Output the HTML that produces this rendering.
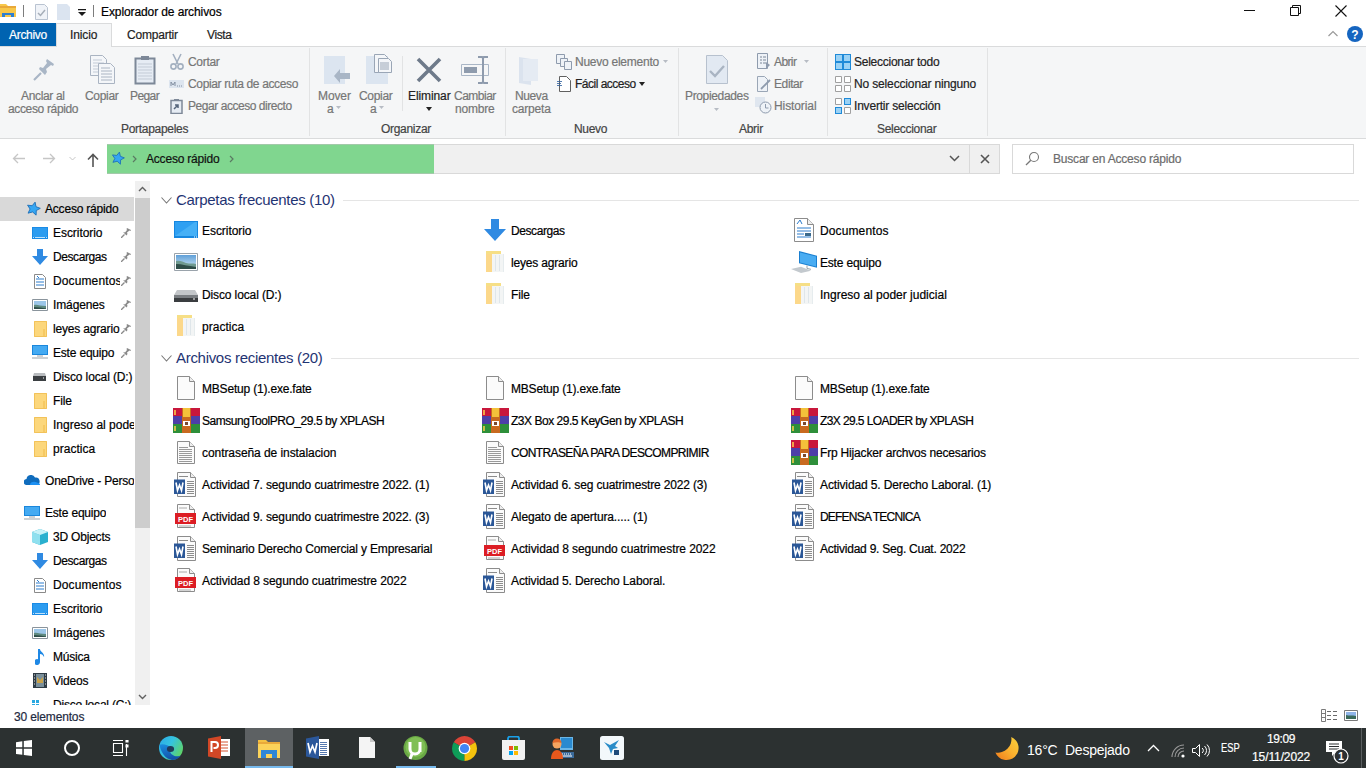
<!DOCTYPE html>
<html><head><meta charset="utf-8">
<style>
*{box-sizing:border-box;margin:0;padding:0}
html,body{width:1366px;height:768px;overflow:hidden;background:#fff;font-family:"Liberation Sans",sans-serif;font-size:12px;color:#000;position:relative}
.a{position:absolute;white-space:nowrap}
.t{font-size:12px;line-height:14px;-webkit-text-stroke:.2px currentColor}
.sep{top:48px;width:1px;height:88px;background:#e2e3e4}
.gl{top:122px;color:#444;letter-spacing:-.3px}
.dis{color:#767676}
.nt{overflow:hidden;color:#000;letter-spacing:-.2px}
.ct{color:#000;letter-spacing:-.18px}
.hd{font-size:15px;line-height:18px;color:#1f3473;letter-spacing:-.3px}
</style></head><body>
<!-- TITLE BAR -->
<div class="a" style="left:0;top:0;width:1366px;height:23px;background:#fff"></div>
<svg class="a" style="left:0;top:2px" width="17" height="16" viewBox="0 0 17 16">
 <path d="M0 2h6l2 2h8v11H0z" fill="#f8c84a"/><path d="M0 4h16v2H0z" fill="#e9a93a"/>
 <path d="M2 11h12v4h-3v-2H5v2H2z" fill="#2f7fd0"/>
</svg>
<div class="a" style="left:23px;top:5px;width:1px;height:12px;background:#7d7d7d"></div>
<svg class="a" style="left:35px;top:4px" width="13" height="16" viewBox="0 0 13 16">
 <path d="M.5.5h9l3 3v12H.5z" fill="#f0f3f8" stroke="#b9c3d1"/><path d="M3 9l2.5 2.5L10 6" stroke="#a6aeb8" stroke-width="1.5" fill="none"/>
</svg>
<svg class="a" style="left:57px;top:4px" width="14" height="16" viewBox="0 0 14 16">
 <path d="M0 0h10l3 3v13H0z" fill="#dbe4f0"/>
</svg>
<svg class="a" style="left:78px;top:9px" width="8" height="8" viewBox="0 0 8 8">
 <path d="M0 0h8v1.3H0z M0 3h8L4 7z" fill="#1a1a1a"/>
</svg>
<div class="a" style="left:93px;top:5px;width:1px;height:12px;background:#7d7d7d"></div>
<div class="a t" style="left:101px;top:5px;letter-spacing:-.1px">Explorador de archivos</div>
<!-- window controls -->
<div class="a" style="left:1244px;top:10px;width:11px;height:1px;background:#111"></div>
<svg class="a" style="left:1290px;top:5px" width="11" height="11" viewBox="0 0 11 11">
 <path d="M.5 2.5h8v8h-8z M2.5 2.5V.5h8v8h-2" fill="none" stroke="#111"/>
</svg>
<svg class="a" style="left:1335px;top:5px" width="12" height="12" viewBox="0 0 12 12">
 <path d="M.5.5l11 11M11.5.5l-11 11" stroke="#111" stroke-width="1.1"/>
</svg>
<!-- TABS -->
<div class="a" style="left:0;top:23px;width:56px;height:23px;background:#0063b1"></div>
<div class="a t" style="left:9px;top:28px;color:#fff;letter-spacing:-.3px">Archivo</div>
<div class="a" style="left:56px;top:23px;width:56px;height:24px;background:#f5f6f7;border:1px solid #dadbdc;border-bottom:none"></div>
<div class="a t" style="left:70px;top:28px;color:#222;letter-spacing:-.1px">Inicio</div>
<div class="a t" style="left:127px;top:28px;color:#222;letter-spacing:-.2px">Compartir</div>
<div class="a t" style="left:207px;top:28px;color:#222;letter-spacing:-.4px">Vista</div>
<svg class="a" style="left:1328px;top:30px" width="10" height="7" viewBox="0 0 10 7">
 <path d="M.5 6L5 1.5 9.5 6" fill="none" stroke="#9a9a9a" stroke-width="1.2"/>
</svg>
<svg class="a" style="left:1347px;top:26px" width="16" height="16" viewBox="0 0 16 16">
 <circle cx="8" cy="8" r="8" fill="#1565c0"/>
 <text x="8" y="12.5" font-family="Liberation Sans" font-weight="bold" font-size="12" fill="#fff" text-anchor="middle">?</text>
</svg>
<!-- RIBBON -->
<div class="a" style="left:0;top:46px;width:1366px;height:93px;background:#f5f6f7;border-top:1px solid #dadbdc;border-bottom:1px solid #dadbdc"></div>
<!-- Inicio tab over ribbon border -->
<div class="a" style="left:56px;top:23px;width:56px;height:24px;background:#f5f6f7;border:1px solid #dadbdc;border-bottom:none"></div>
<div class="a t" style="left:70px;top:28px;color:#222;letter-spacing:-.1px">Inicio</div>
<!-- separators -->
<div class="a sep" style="left:309px"></div>
<div class="a sep" style="left:505px"></div>
<div class="a sep" style="left:678px"></div>
<div class="a sep" style="left:827px"></div>
<div class="a sep" style="left:987px"></div>
<div class="a" style="left:402px;top:56px;width:1px;height:55px;background:#e2e3e4"></div>
<!-- group labels -->
<div class="a t gl" style="left:121px">Portapapeles</div>
<div class="a t gl" style="left:381px">Organizar</div>
<div class="a t gl" style="left:574px">Nuevo</div>
<div class="a t gl" style="left:739px">Abrir</div>
<div class="a t gl" style="left:877px">Seleccionar</div>
<!-- Portapapeles -->
<svg class="a" style="left:33px;top:59px" width="22" height="22" viewBox="0 0 22 22">
 <path d="M1 21l7-7" stroke="#a9b6c6" stroke-width="2.2"/>
 <path d="M6 10l6 6 2-3-1-3 5-4 2 1 1-2-7-5-1 2 1 2-4 5-3-1z" fill="#a9b6c6"/>
</svg>
<div class="a t dis" style="left:21px;top:89px;letter-spacing:-.35px">Anclar al</div>
<div class="a t dis" style="left:8px;top:102px;letter-spacing:-.35px">acceso rápido</div>
<svg class="a" style="left:90px;top:55px" width="26" height="30" viewBox="0 0 26 30">
 <path d="M.5.5h12l4 4v16H.5z" fill="#f4f6f9" stroke="#aab4c2"/>
 <path d="M3 5h9M3 8h11M3 11h11M3 14h11M3 17h11" stroke="#c3cbd6"/>
 <path d="M8.5 8.5h12l4 4v16h-16z" fill="#f4f6f9" stroke="#aab4c2"/>
 <path d="M11 13h9M11 16h11M11 19h11M11 22h11M11 25h11" stroke="#aab4c2"/>
</svg>
<div class="a t dis" style="left:85px;top:89px;letter-spacing:-.3px">Copiar</div>
<svg class="a" style="left:134px;top:55px" width="22" height="30" viewBox="0 0 22 30">
 <path d="M1.5 3.5h19v25h-19z" fill="#e6ecf4" stroke="#7d8898" stroke-width="2"/>
 <path d="M7 1h8v4H7z" fill="#7d8898"/>
 <path d="M4 9h14M4 12h14M4 15h14M4 18h14M4 21h14M4 24h14" stroke="#c3cbd6"/>
</svg>
<div class="a t dis" style="left:130px;top:89px;letter-spacing:-.6px">Pegar</div>
<svg class="a" style="left:170px;top:53px" width="14" height="17" viewBox="0 0 14 17">
 <path d="M3 1l5 10M11 1L6 11" stroke="#a3b0c0" stroke-width="1.6"/>
 <circle cx="3.5" cy="13.5" r="2.6" fill="none" stroke="#a3b0c0" stroke-width="1.6"/>
 <circle cx="10.5" cy="13.5" r="2.6" fill="none" stroke="#a3b0c0" stroke-width="1.6"/>
</svg>
<div class="a t dis" style="left:188px;top:55px;letter-spacing:-.3px">Cortar</div>
<svg class="a" style="left:169px;top:80px" width="15" height="8" viewBox="0 0 15 8">
 <path d="M0 0h15v8H0z" fill="#dde5ef"/><path d="M2 6V2l2 3 2-3v4M8 6h1M10 6h1M12 6h1" stroke="#8390a2" fill="none"/>
</svg>
<div class="a t dis" style="left:188px;top:77px;letter-spacing:-.35px">Copiar ruta de acceso</div>
<svg class="a" style="left:170px;top:98px" width="13" height="16" viewBox="0 0 13 16">
 <path d="M1 2.5h11v13H1z" fill="#e6ecf4" stroke="#7d8898" stroke-width="1.5"/>
 <path d="M4 1h5v2H4z" fill="#7d8898"/><path d="M4 11l4-4M5 7h3v3" stroke="#55657c" stroke-width="1.5" fill="none"/>
</svg>
<div class="a t dis" style="left:188px;top:99px;letter-spacing:-.45px">Pegar acceso directo</div>
<!-- Organizar -->
<svg class="a" style="left:324px;top:55px" width="27" height="30" viewBox="0 0 27 30">
 <path d="M0 1h21v28H0z" fill="#dce5f0"/><path d="M10 21l6-7v4h10v6H16v4z" fill="#a9b6c6"/>
</svg>
<div class="a t dis" style="left:318px;top:89px;letter-spacing:-.1px">Mover</div>
<div class="a t dis" style="left:327px;top:102px">a</div>
<svg class="a" style="left:336px;top:106px" width="5" height="3"><path d="M0 0h5L2.5 3z" fill="#b7bcc4"/></svg>
<svg class="a" style="left:365px;top:54px" width="28" height="31" viewBox="0 0 28 31">
 <path d="M1 2h22v28H1z" fill="#dce5f0"/>
 <path d="M9.5.5h10l3 3v15h-13z" fill="#f4f6f9" stroke="#9aa6b6"/><path d="M13.5 4.5h10l3 3v11h-13z" fill="#f4f6f9" stroke="#9aa6b6"/>
 <path d="M15 9h9M15 11h9M15 13h9M15 15h9" stroke="#9aa6b6"/>
</svg>
<div class="a t dis" style="left:359px;top:89px;letter-spacing:-.3px">Copiar</div>
<div class="a t dis" style="left:370px;top:102px">a</div>
<svg class="a" style="left:379px;top:106px" width="5" height="3"><path d="M0 0h5L2.5 3z" fill="#b7bcc4"/></svg>
<svg class="a" style="left:416px;top:57px" width="26" height="26" viewBox="0 0 26 26">
 <path d="M2 2l22 22M24 2L2 24" stroke="#6e7a8a" stroke-width="3.6"/>
</svg>
<div class="a t" style="left:408px;top:89px;color:#222;letter-spacing:-.1px">Eliminar</div>
<svg class="a" style="left:426px;top:107px" width="6" height="4"><path d="M0 0h6L3 4z" fill="#222"/></svg>
<svg class="a" style="left:460px;top:56px" width="30" height="28" viewBox="0 0 30 28">
 <path d="M1.5 8.5h27v11h-27z" fill="none" stroke="#a9b6c6"/><path d="M4 11h13v6H4z" fill="#8e9bad"/>
 <path d="M18 1h4l1 1 1-1h4M23 2v24M18 27h4l1-1 1 1h4" stroke="#8e9bad" stroke-width="2" fill="none"/>
</svg>
<div class="a t dis" style="left:454px;top:89px;letter-spacing:-.5px">Cambiar</div>
<div class="a t dis" style="left:455px;top:102px;letter-spacing:-.2px">nombre</div>
<!-- Nuevo -->
<svg class="a" style="left:519px;top:57px" width="20" height="28" viewBox="0 0 20 28">
 <path d="M0 0l12 2v26L0 26z" fill="#dbe3ee"/><path d="M4 2h15v22H4z" fill="#e5ebf3"/>
</svg>
<div class="a t dis" style="left:515px;top:89px;letter-spacing:-.4px">Nueva</div>
<div class="a t dis" style="left:512px;top:102px;letter-spacing:-.2px">carpeta</div>
<svg class="a" style="left:556px;top:54px" width="16" height="16" viewBox="0 0 16 16">
 <path d="M.5.5h8v9h-8z" fill="#eef2f7" stroke="#8e9bad"/><path d="M4.5 4.5h7v8h-7z" fill="#eef2f7" stroke="#8e9bad"/><path d="M8.5 7.5h7v8h-7z" fill="#eef2f7" stroke="#8e9bad"/>
</svg>
<div class="a t dis" style="left:575px;top:55px;letter-spacing:-.25px">Nuevo elemento</div>
<svg class="a" style="left:663px;top:60px" width="5" height="3"><path d="M0 0h5L2.5 3z" fill="#b7bcc4"/></svg>
<svg class="a" style="left:556px;top:76px" width="15" height="16" viewBox="0 0 15 16">
 <path d="M3.5.5h7l4 4v11h-11z" fill="#fff" stroke="#606060"/><path d="M1 5.5h5M1 7.5h4M1 9.5h5" stroke="#2a5c9a" stroke-width=".8"/>
</svg>
<div class="a t" style="left:575px;top:77px;color:#222;letter-spacing:-.5px">Fácil acceso</div>
<svg class="a" style="left:639px;top:82px" width="6" height="4"><path d="M0 0h6L3 4z" fill="#222"/></svg>
<!-- Abrir -->
<svg class="a" style="left:706px;top:55px" width="22" height="30" viewBox="0 0 22 30">
 <path d="M.5.5h16l5 5v23H.5z" fill="#e2e9f2" stroke="#b7c1ce"/><path d="M4 16l5 5 9-10" stroke="#a9b4c2" stroke-width="2.4" fill="none"/>
</svg>
<div class="a t dis" style="left:685px;top:89px;letter-spacing:-.35px">Propiedades</div>
<svg class="a" style="left:714px;top:108px" width="5" height="3"><path d="M0 0h5L2.5 3z" fill="#b7bcc4"/></svg>
<svg class="a" style="left:757px;top:53px" width="14" height="17" viewBox="0 0 14 17">
 <path d="M.5.5h10v15H.5z" fill="#eef2f7" stroke="#8e9bad"/><path d="M3 4h2M3 7h2M3 10h2M6 4h3M6 7h3M6 10h3" stroke="#7d8898"/><path d="M9 16V9l4 3z" fill="#8e9bad"/>
</svg>
<div class="a t dis" style="left:774px;top:55px;letter-spacing:-.6px">Abrir</div>
<svg class="a" style="left:804px;top:60px" width="5" height="3"><path d="M0 0h5L2.5 3z" fill="#b7bcc4"/></svg>
<svg class="a" style="left:757px;top:76px" width="14" height="17" viewBox="0 0 14 17">
 <path d="M.5.5h7l3 3v12H.5z" fill="#eef2f7" stroke="#9aa6b6"/><path d="M4 13l9-9" stroke="#8e9bad" stroke-width="1.8"/>
</svg>
<div class="a t dis" style="left:774px;top:77px;letter-spacing:-.4px">Editar</div>
<svg class="a" style="left:755px;top:97px" width="17" height="17" viewBox="0 0 17 17">
 <path d="M0 0h10v10H0z" fill="#dfe6ef"/><circle cx="10.5" cy="10.5" r="5.5" fill="#eef2f7" stroke="#8e9bad"/><path d="M10.5 7v4h3" stroke="#8e9bad" fill="none"/>
</svg>
<div class="a t dis" style="left:774px;top:99px;letter-spacing:-.1px">Historial</div>
<!-- Seleccionar -->
<svg class="a" style="left:835px;top:54px" width="16" height="16" viewBox="0 0 16 16">
 <path d="M0 0h16v16H0z" fill="#1f8ad8"/><path d="M1 1h6v6H1zM9 1h6v6H9zM1 9h6v6H1zM9 9h6v6H9z" fill="#9bd2f5"/>
</svg>
<div class="a t" style="left:854px;top:55px;color:#222;letter-spacing:-.25px">Seleccionar todo</div>
<svg class="a" style="left:835px;top:76px" width="16" height="16" viewBox="0 0 16 16">
 <path d="M.5.5h6v6h-6zM9.5.5h6v6h-6zM.5 9.5h6v6h-6zM9.5 9.5h6v6h-6z" fill="#fff" stroke="#a0a0a0"/>
</svg>
<div class="a t" style="left:854px;top:77px;color:#222;letter-spacing:-.15px">No seleccionar ninguno</div>
<svg class="a" style="left:835px;top:98px" width="16" height="16" viewBox="0 0 16 16">
 <path d="M.5.5h6v6h-6z" fill="#fff" stroke="#a0a0a0"/><path d="M9 0h7v7H9zM0 9h7v7H0z" fill="#1f8ad8"/><path d="M10 1h5v5h-5zM1 10h5v5H1z" fill="#9bd2f5"/><path d="M9.5 9.5h6v6h-6z" fill="#fff" stroke="#a0a0a0"/>
</svg>
<div class="a t" style="left:854px;top:99px;color:#222;letter-spacing:-.2px">Invertir selección</div>
<svg width="0" height="0" style="position:absolute">
<defs>
 <symbol id="star" viewBox="-1 -1 16 16"><path transform="rotate(14 7 7)" d="M7 0l2.1 4.5 4.9.6-3.6 3.3 1 4.8L7 10.8 2.6 13.2l1-4.8L0 5.1l4.9-.6z" fill="#35a6f2" stroke="#1d6fb8" stroke-width=".9" stroke-linejoin="round"/></symbol>
 <symbol id="desk" viewBox="0 0 16 12"><path d="M0 0h16v12H0z" fill="#1a8be6"/><path d="M1 1h14v9H1z" fill="#2c9cf0"/><path d="M1 10.5h1M14 10.5h1M3 10.5h10" stroke="#bfe2fb"/></symbol>
 <symbol id="down" viewBox="0 0 16 16"><path d="M5 0h6v7h5l-8 9-8-9h5z" fill="#2f8ae2"/></symbol>
 <symbol id="docs" viewBox="0 0 12 15"><path d="M.5.5h8l3 3v11H.5z" fill="#fff" stroke="#8a8a8a"/><path d="M2 5h8M2 8h8M2 11h8" stroke="#2c7ccc"/><path d="M3 2l2 2" stroke="#2c7ccc"/></symbol>
 <symbol id="pics" viewBox="0 0 16 12"><path d="M.5.5h15v11H.5z" fill="#fff" stroke="#8a949c"/><path d="M2 2h12v8H2z" fill="#9cc6e8"/><path d="M2 6c3-1 6 1 12 1v3H2z" fill="#5f8a80"/><path d="M2 8c4 0 8 1 12 1.5V10H2z" fill="#2e4d48"/></symbol>
 <symbol id="fold" viewBox="0 0 13 16"><path d="M0 0h13v16H0z" fill="#fcd77c"/><path d="M.5.5h12v15H.5z" fill="none" stroke="#f2c25a"/><path d="M10 8v7" stroke="#f0bb4a"/></symbol>
 <symbol id="pc" viewBox="0 0 16 14"><path d="M0 0h16v10H0z" fill="#1a87dc"/><path d="M1 1h14v8H1z" fill="#44aaf2"/><path d="M5 11h6M0 13h16" stroke="#9aa3aa"/></symbol>
 <symbol id="drive" viewBox="0 0 13 8"><path d="M1 0h11l1 3H0z" fill="#b9bcbf"/><path d="M0 3h13v5H0z" fill="#3b3f42"/><path d="M10 5h1" stroke="#fff"/></symbol>
 <symbol id="pin" viewBox="0 0 10 10"><path d="M0 10l3.5-3.5" stroke="#8a8a8a" stroke-width="1.3"/><path d="M2.5 4.5l3 3 1-1.5-.5-1.5 2.5-2 1 .5.5-1L6 0l-.5 1 .5 1-2 2.5L2.5 4z" fill="#8a8a8a"/></symbol>
 <symbol id="cloud" viewBox="0 0 16 10"><path d="M3 10a3 3 0 0 1-.5-6A4.5 4.5 0 0 1 11 2.5 3.5 3.5 0 0 1 12.5 10z" fill="#0f6cbd"/><path d="M6 10c0-3 4-4 7-2.5 2 .5 3 1 3 2.5z" fill="#1c90f3"/></symbol>
 <symbol id="cube" viewBox="0 0 16 16"><path d="M8 0l8 3v10l-8 3-8-3V3z" fill="#2ab0cf"/><path d="M0 3l8 3v10l-8-3z" fill="#8fe0ef"/><path d="M8 0l8 3-8 3-8-3z" fill="#c7f2f8"/></symbol>
 <symbol id="music" viewBox="0 0 10 16"><path d="M3 0h2c0 3 5 4 4 8-1-2-2-3-4-3v8a3 3 0 1 1-2-2.8z" fill="#1e88e5"/></symbol>
 <symbol id="video" viewBox="0 0 14 15"><path d="M0 0h14v15H0z" fill="#2d3a44"/><path d="M3 1h8v13H3z" fill="#7a8f9a"/><path d="M1 2h1M1 5h1M1 8h1M1 11h1M12 2h1M12 5h1M12 8h1M12 11h1" stroke="#ddd"/><path d="M4 4l3 3 3-3v6H4z" fill="#c9a24a"/></symbol>
 <symbol id="winc" viewBox="0 0 16 10"><path d="M0 0h3v3H0zM4 0h3v3H4zM0 4h3v3H0zM4 4h3v3H4z" fill="#29a8e0"/><path d="M9 8h7" stroke="#aab"/></symbol>
 <!-- content icons -->
 <symbol id="Ldesk" viewBox="0 0 24 17"><path d="M0 0h24v17H0z" fill="#1687e0"/><path d="M1 1h22v14H1z" fill="#2fa0f2"/><path d="M1 15l20-14h2v14z" fill="#46b0f6"/><path d="M20 16h1M22 16h1" stroke="#fff"/></symbol>
 <symbol id="Ldown" viewBox="0 0 22 22"><path d="M7 0h8v10h7L11 22 0 10h7z" fill="#2f8ae2"/></symbol>
 <symbol id="Ldocs" viewBox="0 0 20 24"><path d="M.5.5h13l6 6v17H.5z" fill="#fff" stroke="#8c8c8c"/><path d="M13.5.5v6h6" fill="#eee" stroke="#8c8c8c"/><path d="M3 10h14M3 13h14M3 16h7M3 19h14" stroke="#2c7ccc"/><path d="M11 15h6v3h-6z" fill="#3b6a8c"/><path d="M3 6l3-4 2 4" stroke="#2c7ccc" fill="none"/></symbol>
 <symbol id="Lpics" viewBox="0 0 24 18"><defs><linearGradient id="sky" x1="0" y1="0" x2="0" y2="1"><stop offset="0" stop-color="#5f9fd8"/><stop offset="1" stop-color="#d8ecf6"/></linearGradient></defs><path d="M.5.5h23v17H.5z" fill="#fff" stroke="#9aa3ab"/><path d="M2 2h20v14H2z" fill="url(#sky)"/><path d="M2 8c4-1 7 1 10 2 4 1 7 0 10 1v5H2z" fill="#6f9a90"/><path d="M2 11c6 0 12 2 20 3v2H2z" fill="#2e4d48"/></symbol>
 <symbol id="Lfold" viewBox="0 0 19 22"><path d="M0 0h15v3H0z" fill="#f6df86"/><path d="M0 3h6v18H0z" fill="#fcd88a"/><path d="M6 3h12v18H6z" fill="#f3f5f5"/><path d="M9.5 4v16M13.5 4v16" stroke="#dfe6ea"/><path d="M17.5 3v18" stroke="#e6ecee"/></symbol>
 <symbol id="Lpc" viewBox="0 0 28 23"><path d="M9 0l18 4.7v12L9 12.2z" fill="#1a7fd0"/><path d="M10 1.5l16 4v10L10 11.5z" fill="#49acf2"/><path d="M17 14.5v3l4 .8" stroke="#9aa3aa" fill="none"/><path d="M1 18l10-2.2 10 4L11 22z" fill="#c3c9ce"/></symbol>
 <symbol id="Ldrive" viewBox="0 0 24 12"><path d="M3 0h18l3 5H0z" fill="#c3c6c9"/><path d="M0 5h24v6H0z" fill="#7a7e82"/><path d="M0 8h24v4H0z" fill="#3a3d40"/><path d="M19 9h2" stroke="#fff"/></symbol>
 <symbol id="Lfile" viewBox="0 0 18 24"><path d="M.5.5h12l5 5v18H.5z" fill="#fbfbfb" stroke="#8c8c8c"/><path d="M12.5.5v5h5" fill="#eee" stroke="#8c8c8c"/></symbol>
 <symbol id="Ltxt" viewBox="0 0 18 23"><path d="M.5.5h12l5 5v17H.5z" fill="#fbfbfb" stroke="#8c8c8c"/><path d="M12.5.5v5h5" fill="#eee" stroke="#8c8c8c"/><path d="M2 6.5h9M2 8.5h13M2 10.5h13M2 12.5h13M2 14.5h13M2 16.5h13M2 18.5h13M2 20.5h13" stroke="#9a9a9a"/></symbol>
 <symbol id="Lword" viewBox="0 0 23 25"><path d="M3.5.5h13l5 5v19h-18z" fill="#fbfbfb" stroke="#8c8c8c"/><path d="M16.5.5v5h5" fill="#eee" stroke="#8c8c8c"/><path d="M5 4.5h9M13 9.5h7M13 11.5h7M13 13.5h7M13 15.5h7M13 17.5h7M13 19.5h7M13 21.5h7" stroke="#8c8c8c"/><path d="M0 7.5h11v14.5H0z" fill="#2b5797"/><path d="M2 10.5l1.5 8 2-5.5 2 5.5 1.5-8" stroke="#fff" stroke-width="1.6" fill="none"/></symbol>
 <symbol id="Lpdf" viewBox="0 0 22 24"><path d="M2.5.5h12l5 5v18h-17z" fill="#fbfbfb" stroke="#8c8c8c"/><path d="M14.5.5v5h5" fill="#eee" stroke="#8c8c8c"/><path d="M4 4h8M4 22h12" stroke="#aaa"/><path d="M0 9h21v11H0z" fill="#dc1d24"/><text x="10.5" y="17.8" font-family="Liberation Sans" font-weight="bold" font-size="7.5" fill="#fff" text-anchor="middle">PDF</text></symbol>
 <symbol id="Lrar" viewBox="0 0 27 25"><path d="M0 0h27v9H0z" fill="#c8173c"/><path d="M0 8h27v8H0z" fill="#4d3fa8"/><path d="M0 16h27v9H0z" fill="#2e8f3a"/><path d="M9 0h9v25H9z" fill="#c86a20"/><path d="M10 0h7v9h-7z" fill="#f4c23a"/><path d="M10 13h7v5h-7z" fill="#fff"/><path d="M12 14h3v3h-3z" fill="#7a4a30"/><path d="M2 2v5M2 18v5" stroke="#ffd24a" stroke-width="1.5"/></symbol>
</defs></svg>

<!-- ADDRESS BAR -->
<svg class="a" style="left:12px;top:153px" width="14" height="11" viewBox="0 0 14 11"><path d="M13 5.5H1.5M6 1L1.5 5.5 6 10" fill="none" stroke="#c6c6c6" stroke-width="1.3"/></svg>
<svg class="a" style="left:42px;top:153px" width="14" height="11" viewBox="0 0 14 11"><path d="M1 5.5h11.5M8 1l4.5 4.5L8 10" fill="none" stroke="#c6c6c6" stroke-width="1.3"/></svg>
<svg class="a" style="left:69px;top:156px" width="7" height="5" viewBox="0 0 7 5"><path d="M.5 1L3.5 4 6.5 1" fill="none" stroke="#c6c6c6"/></svg>
<svg class="a" style="left:87px;top:153px" width="12" height="14" viewBox="0 0 12 14"><path d="M6 14V1.5M1 6.5l5-5 5 5" fill="none" stroke="#555" stroke-width="1.6"/></svg>
<div class="a" style="left:107px;top:144px;width:893px;height:30px;background:#f0f0f0;border:1px solid #d9d9d9"></div>
<div class="a" style="left:107px;top:144px;width:327px;height:30px;background:#80d68f;border-top:1px solid #a3c9aa;border-bottom:1px solid #a3c9aa"></div>
<svg class="a" style="left:111px;top:151px" width="14" height="14"><use href="#star"/></svg>
<svg class="a" style="left:132px;top:155px" width="5" height="8" viewBox="0 0 5 8"><path d="M1 1l3 3-3 3" fill="none" stroke="#5a7a62" stroke-width="1.2"/></svg>
<div class="a t" style="left:146px;top:152px;color:#111;letter-spacing:-.2px">Acceso rápido</div>
<svg class="a" style="left:229px;top:155px" width="5" height="8" viewBox="0 0 5 8"><path d="M1 1l3 3-3 3" fill="none" stroke="#5a7a62" stroke-width="1.2"/></svg>
<svg class="a" style="left:949px;top:155px" width="11" height="7" viewBox="0 0 11 7"><path d="M1 1l4.5 4.5L10 1" fill="none" stroke="#555" stroke-width="1.5"/></svg>
<div class="a" style="left:969px;top:145px;width:1px;height:28px;background:#d9d9d9"></div>
<svg class="a" style="left:980px;top:154px" width="10" height="10" viewBox="0 0 10 10"><path d="M1 1l8 8M9 1L1 9" stroke="#555" stroke-width="1.6"/></svg>
<div class="a" style="left:1012px;top:144px;width:342px;height:30px;background:#fff;border:1px solid #d9d9d9"></div>
<svg class="a" style="left:1025px;top:151px" width="15" height="15" viewBox="0 0 15 15"><circle cx="9" cy="6" r="4.5" fill="none" stroke="#777" stroke-width="1.1"/><path d="M5.8 9.2L1 14" stroke="#777" stroke-width="1.3"/></svg>
<div class="a t" style="left:1053px;top:152px;color:#6d6d6d;letter-spacing:-.2px">Buscar en Acceso rápido</div>
<!-- NAV -->
<div class="a" style="left:0;top:197px;width:134px;height:24px;background:#d9d9d9"></div>
<svg class="a" style="left:26px;top:201px" width="15" height="15"><use href="#star"/></svg>
<div class="a t" style="left:45px;top:202px;letter-spacing:-.2px">Acceso rápido</div>
<svg class="a" style="left:32px;top:227px" width="16" height="12"><use href="#desk"/></svg>
<div class="a t nt" style="left:53px;top:226px;width:67px;letter-spacing:-0.052px">Escritorio</div>
<svg class="a" style="left:121px;top:228px" width="10" height="10"><use href="#pin"/></svg>
<svg class="a" style="left:32px;top:249px" width="16" height="16"><use href="#down"/></svg>
<div class="a t nt" style="left:53px;top:250px;width:67px;letter-spacing:-0.418px">Descargas</div>
<svg class="a" style="left:121px;top:252px" width="10" height="10"><use href="#pin"/></svg>
<svg class="a" style="left:34px;top:274px" width="12" height="15"><use href="#docs"/></svg>
<div class="a t nt" style="left:53px;top:274px;width:67px;letter-spacing:0.123px">Documentos</div>
<svg class="a" style="left:121px;top:276px" width="10" height="10"><use href="#pin"/></svg>
<svg class="a" style="left:32px;top:299px" width="16" height="12"><use href="#pics"/></svg>
<div class="a t nt" style="left:53px;top:298px;width:67px;letter-spacing:-0.125px">Imágenes</div>
<svg class="a" style="left:121px;top:300px" width="10" height="10"><use href="#pin"/></svg>
<svg class="a" style="left:34px;top:321px" width="13" height="16"><use href="#fold"/></svg>
<div class="a t nt" style="left:53px;top:322px;width:67px;letter-spacing:-0.177px">leyes agrario</div>
<svg class="a" style="left:121px;top:324px" width="10" height="10"><use href="#pin"/></svg>
<svg class="a" style="left:32px;top:345px" width="16" height="14"><use href="#pc"/></svg>
<div class="a t nt" style="left:53px;top:346px;width:67px;letter-spacing:-0.19px">Este equipo</div>
<svg class="a" style="left:121px;top:348px" width="10" height="10"><use href="#pin"/></svg>
<svg class="a" style="left:33px;top:373px" width="13" height="8"><use href="#drive"/></svg>
<div class="a t nt" style="left:53px;top:370px;width:81px;letter-spacing:-0.122px">Disco local (D:)</div>
<svg class="a" style="left:34px;top:393px" width="13" height="16"><use href="#fold"/></svg>
<div class="a t nt" style="left:53px;top:394px;width:81px;letter-spacing:-0.161px">File</div>
<svg class="a" style="left:34px;top:417px" width="13" height="16"><use href="#fold"/></svg>
<div class="a t nt" style="left:53px;top:418px;width:81px;letter-spacing:0.002px">Ingreso al poder judicial</div>
<svg class="a" style="left:34px;top:441px" width="13" height="16"><use href="#fold"/></svg>
<div class="a t nt" style="left:53px;top:442px;width:81px;letter-spacing:0.021px">practica</div>
<svg class="a" style="left:24px;top:475px" width="16" height="10"><use href="#cloud"/></svg>
<div class="a t nt" style="left:45px;top:474px;width:89px">OneDrive - Personal</div>
<svg class="a" style="left:24px;top:506px" width="16" height="14"><use href="#pc"/></svg>
<div class="a t nt" style="left:45px;top:506px;letter-spacing:-0.19px">Este equipo</div>
<svg class="a" style="left:32px;top:529px" width="16" height="16"><use href="#cube"/></svg>
<div class="a t nt" style="left:53px;top:530px;width:81px;letter-spacing:-0.2px">3D Objects</div>
<svg class="a" style="left:32px;top:553px" width="16" height="16"><use href="#down"/></svg>
<div class="a t nt" style="left:53px;top:554px;width:81px;letter-spacing:-0.418px">Descargas</div>
<svg class="a" style="left:34px;top:578px" width="12" height="15"><use href="#docs"/></svg>
<div class="a t nt" style="left:53px;top:578px;width:81px;letter-spacing:0.123px">Documentos</div>
<svg class="a" style="left:32px;top:603px" width="16" height="12"><use href="#desk"/></svg>
<div class="a t nt" style="left:53px;top:602px;width:81px;letter-spacing:-0.052px">Escritorio</div>
<svg class="a" style="left:32px;top:627px" width="16" height="12"><use href="#pics"/></svg>
<div class="a t nt" style="left:53px;top:626px;width:81px;letter-spacing:-0.125px">Imágenes</div>
<svg class="a" style="left:35px;top:649px" width="10" height="16"><use href="#music"/></svg>
<div class="a t nt" style="left:53px;top:650px;width:81px;letter-spacing:-0.2px">Música</div>
<svg class="a" style="left:33px;top:673px" width="14" height="15"><use href="#video"/></svg>
<div class="a t nt" style="left:53px;top:674px;width:81px;letter-spacing:-0.2px">Videos</div>
<svg class="a" style="left:32px;top:700px" width="16" height="10"><use href="#winc"/></svg>
<div class="a t nt" style="left:53px;top:698px;width:81px;letter-spacing:-0.2px">Disco local (C:)</div>
<div class="a" style="left:0;top:705px;width:1366px;height:23px;background:#fff"></div>
<div class="a" style="left:135px;top:181px;width:15px;height:524px;background:#f0f0f0"></div>
<div class="a" style="left:135px;top:198px;width:15px;height:330px;background:#cdcdcd"></div>
<svg class="a" style="left:138px;top:186px" width="9" height="6" viewBox="0 0 9 6"><path d="M1 5l3.5-3.5L8 5" fill="none" stroke="#606060" stroke-width="1.4"/></svg>
<svg class="a" style="left:138px;top:694px" width="9" height="6" viewBox="0 0 9 6"><path d="M1 1l3.5 3.5L8 1" fill="none" stroke="#606060" stroke-width="1.4"/></svg>
<!-- CONTENT -->
<svg class="a" style="left:161px;top:197px" width="11" height="7" viewBox="0 0 11 7"><path d="M.5 .5l5 5.5 5-5.5" fill="none" stroke="#777" stroke-width="1.1"/></svg>
<div class="a hd" style="left:176px;top:191px">Carpetas frecuentes (10)</div>
<div class="a" style="left:343px;top:200px;width:1016px;height:1px;background:#e5e5e5"></div>
<svg class="a" style="left:174px;top:221px" width="24" height="17"><use href="#Ldesk"/></svg>
<div class="a t ct" style="left:202px;top:224px;letter-spacing:-0.052px">Escritorio</div>
<svg class="a" style="left:484px;top:219px" width="22" height="22"><use href="#Ldown"/></svg>
<div class="a t ct" style="left:511px;top:224px;letter-spacing:-0.418px">Descargas</div>
<svg class="a" style="left:794px;top:218px" width="20" height="24"><use href="#Ldocs"/></svg>
<div class="a t ct" style="left:820px;top:224px;letter-spacing:0.123px">Documentos</div>
<svg class="a" style="left:174px;top:253px" width="24" height="18"><use href="#Lpics"/></svg>
<div class="a t ct" style="left:202px;top:256px;letter-spacing:-0.125px">Imágenes</div>
<svg class="a" style="left:486px;top:251px" width="19" height="22"><use href="#Lfold"/></svg>
<div class="a t ct" style="left:511px;top:256px;letter-spacing:-0.177px">leyes agrario</div>
<svg class="a" style="left:790px;top:251px" width="28" height="23"><use href="#Lpc"/></svg>
<div class="a t ct" style="left:820px;top:256px;letter-spacing:-0.19px">Este equipo</div>
<svg class="a" style="left:174px;top:290px" width="24" height="12"><use href="#Ldrive"/></svg>
<div class="a t ct" style="left:202px;top:288px;letter-spacing:-0.122px">Disco local (D:)</div>
<svg class="a" style="left:486px;top:283px" width="19" height="22"><use href="#Lfold"/></svg>
<div class="a t ct" style="left:511px;top:288px;letter-spacing:-0.161px">File</div>
<svg class="a" style="left:795px;top:283px" width="19" height="22"><use href="#Lfold"/></svg>
<div class="a t ct" style="left:820px;top:288px;letter-spacing:0.002px">Ingreso al poder judicial</div>
<svg class="a" style="left:177px;top:315px" width="19" height="22"><use href="#Lfold"/></svg>
<div class="a t ct" style="left:202px;top:320px;letter-spacing:0.021px">practica</div>
<svg class="a" style="left:161px;top:355px" width="11" height="7" viewBox="0 0 11 7"><path d="M.5 .5l5 5.5 5-5.5" fill="none" stroke="#777" stroke-width="1.1"/></svg>
<div class="a hd" style="left:176px;top:349px">Archivos recientes (20)</div>
<div class="a" style="left:331px;top:358px;width:1028px;height:1px;background:#e5e5e5"></div>
<svg class="a" style="left:177px;top:376px" width="18" height="24"><use href="#Lfile"/></svg>
<div class="a t ct" style="left:202px;top:382px;letter-spacing:-0.19px">MBSetup (1).exe.fate</div>
<svg class="a" style="left:486px;top:376px" width="18" height="24"><use href="#Lfile"/></svg>
<div class="a t ct" style="left:511px;top:382px;letter-spacing:-0.19px">MBSetup (1).exe.fate</div>
<svg class="a" style="left:795px;top:376px" width="18" height="24"><use href="#Lfile"/></svg>
<div class="a t ct" style="left:820px;top:382px;letter-spacing:-0.19px">MBSetup (1).exe.fate</div>
<svg class="a" style="left:173px;top:408px" width="27" height="25"><use href="#Lrar"/></svg>
<div class="a t ct" style="left:202px;top:414px;letter-spacing:-0.454px">SamsungToolPRO_29.5 by XPLASH</div>
<svg class="a" style="left:482px;top:408px" width="27" height="25"><use href="#Lrar"/></svg>
<div class="a t ct" style="left:511px;top:414px;letter-spacing:-0.476px">Z3X Box 29.5 KeyGen by XPLASH</div>
<svg class="a" style="left:791px;top:408px" width="27" height="25"><use href="#Lrar"/></svg>
<div class="a t ct" style="left:820px;top:414px;letter-spacing:-0.595px">Z3X 29.5 LOADER by XPLASH</div>
<svg class="a" style="left:177px;top:441px" width="18" height="23"><use href="#Ltxt"/></svg>
<div class="a t ct" style="left:202px;top:446px;letter-spacing:-0.068px">contraseña de instalacion</div>
<svg class="a" style="left:486px;top:441px" width="18" height="23"><use href="#Ltxt"/></svg>
<div class="a t ct" style="left:511px;top:446px;letter-spacing:-0.623px">CONTRASEÑA PARA DESCOMPRIMIR</div>
<svg class="a" style="left:791px;top:440px" width="27" height="25"><use href="#Lrar"/></svg>
<div class="a t ct" style="left:820px;top:446px;letter-spacing:-0.181px">Frp Hijacker archvos necesarios</div>
<svg class="a" style="left:174px;top:472px" width="23" height="25"><use href="#Lword"/></svg>
<div class="a t ct" style="left:202px;top:478px;letter-spacing:-0.112px">Actividad 7. segundo cuatrimestre 2022. (1)</div>
<svg class="a" style="left:483px;top:472px" width="23" height="25"><use href="#Lword"/></svg>
<div class="a t ct" style="left:511px;top:478px;letter-spacing:-0.156px">Actividad 6. seg cuatrimestre 2022 (3)</div>
<svg class="a" style="left:792px;top:472px" width="23" height="25"><use href="#Lword"/></svg>
<div class="a t ct" style="left:820px;top:478px;letter-spacing:-0.128px">Actividad 5. Derecho Laboral. (1)</div>
<svg class="a" style="left:175px;top:504px" width="22" height="24"><use href="#Lpdf"/></svg>
<div class="a t ct" style="left:202px;top:510px;letter-spacing:-0.112px">Actividad 9. segundo cuatrimestre 2022. (3)</div>
<svg class="a" style="left:483px;top:504px" width="23" height="25"><use href="#Lword"/></svg>
<div class="a t ct" style="left:511px;top:510px;letter-spacing:-0.135px">Alegato de apertura..... (1)</div>
<svg class="a" style="left:792px;top:504px" width="23" height="25"><use href="#Lword"/></svg>
<div class="a t ct" style="left:820px;top:510px;letter-spacing:-0.794px">DEFENSA TECNICA</div>
<svg class="a" style="left:174px;top:536px" width="23" height="25"><use href="#Lword"/></svg>
<div class="a t ct" style="left:202px;top:542px;letter-spacing:-0.157px">Seminario Derecho Comercial y Empresarial</div>
<svg class="a" style="left:484px;top:536px" width="22" height="24"><use href="#Lpdf"/></svg>
<div class="a t ct" style="left:511px;top:542px;letter-spacing:-0.079px">Actividad 8 segundo cuatrimestre 2022</div>
<svg class="a" style="left:792px;top:536px" width="23" height="25"><use href="#Lword"/></svg>
<div class="a t ct" style="left:820px;top:542px;letter-spacing:-0.24px">Actividad 9. Seg. Cuat. 2022</div>
<svg class="a" style="left:175px;top:568px" width="22" height="24"><use href="#Lpdf"/></svg>
<div class="a t ct" style="left:202px;top:574px;letter-spacing:-0.079px">Actividad 8 segundo cuatrimestre 2022</div>
<svg class="a" style="left:483px;top:568px" width="23" height="25"><use href="#Lword"/></svg>
<div class="a t ct" style="left:511px;top:574px;letter-spacing:-0.108px">Actividad 5. Derecho Laboral.</div>
<!-- STATUS -->
<div class="a t" style="left:14px;top:710px;color:#1e2a40;letter-spacing:-.15px">30 elementos</div>
<svg class="a" style="left:1321px;top:709px" width="17" height="13" viewBox="0 0 17 13"><path d="M.5.5h4v12h-4zM.5 4.5h4M.5 8.5h4" fill="#fff" stroke="#7a7a7a"/><path d="M2.5 2.5h.1M2.5 6.5h.1M2.5 10.5h.1" stroke="#555"/><path d="M6 2.5h4M12 2.5h4M6 6.5h4M12 6.5h4M6 10.5h4M12 10.5h4" stroke="#6a6a6a"/></svg>
<svg class="a" style="left:1344px;top:710px" width="15" height="11" viewBox="0 0 15 11"><path d="M.5.5h13v10H.5z" fill="#fff" stroke="#7a7a7a"/><path d="M2 2h10v7H2z" fill="#8fb4e8"/><path d="M2 5c3 1 6 0 10 1v3H2z" fill="#3b6a5a"/></svg><!-- TASKBAR -->
<div class="a" style="left:0;top:728px;width:1366px;height:40px;background:#2c3131"></div>
<svg class="a" style="left:16px;top:740px" width="16" height="16" viewBox="0 0 16 16"><path d="M0 2.2l6.3-.9v6H0zM7.8 1.1L16 0v7.3H7.8zM0 8.8h6.3v6L0 13.9zM7.8 8.8H16V16l-8.2-1.1z" fill="#fff"/></svg>
<svg class="a" style="left:64px;top:740px" width="16" height="16" viewBox="0 0 16 16"><circle cx="8" cy="8" r="7" fill="none" stroke="#fff" stroke-width="2"/></svg>
<svg class="a" style="left:112px;top:740px" width="17" height="16" viewBox="0 0 17 16"><path d="M1 .5h10M1 15.5h10M1.5 3.5h9v9h-9z" fill="none" stroke="#fff" stroke-width="1.1"/><path d="M14 0h2v2h-2zM14.5 4v12" stroke="#fff" stroke-width="1.1" fill="#fff"/><path d="M13.5 4.5h3v3h-3z" fill="#fff"/></svg>
<!-- edge -->
<svg class="a" style="left:159px;top:736px" width="24" height="24" viewBox="0 0 24 24">
 <defs><linearGradient id="eg" x1="0" y1="0" x2="1" y2=".6"><stop offset="0" stop-color="#2aa8e8"/><stop offset=".5" stop-color="#35c3e0"/><stop offset="1" stop-color="#5ed36a"/></linearGradient>
 <linearGradient id="eb" x1="0" y1="0" x2=".3" y2="1"><stop offset="0" stop-color="#1a8ee0"/><stop offset="1" stop-color="#1352a8"/></linearGradient></defs>
 <circle cx="12" cy="12" r="12" fill="url(#eg)"/>
 <path d="M0.5 9C2 16 6 23 13 24c4 0 7-2 9-4.5-2 1-6 1.5-9-1-2.5-2-2.5-5 0-6.5C9 9 3 7 .5 9z" fill="url(#eb)"/>
 <ellipse cx="11.5" cy="13" rx="3.6" ry="3" fill="#203a5a"/>
</svg>
<!-- powerpoint -->
<svg class="a" style="left:208px;top:736px" width="23" height="23" viewBox="0 0 23 23">
 <path d="M10 3h12v17H10z" fill="#fff"/><path d="M12 6h8M12 9h8M12 12h8M12 15h8" stroke="#d35230"/>
 <path d="M0 2.5L13 0v23L0 20.5z" fill="#d24726"/><path d="M13 5h3a3 3 0 0 1 0 6h-3z" fill="#f0a080" opacity=".0"/>
 <path d="M3.5 16V6h3.5a3 3 0 0 1 0 6H5.5" fill="none" stroke="#fff" stroke-width="2"/>
</svg>
<div class="a" style="left:245px;top:728px;width:48px;height:40px;background:#5d6163"></div>
<div class="a" style="left:245px;top:766px;width:48px;height:2px;background:#76b9ed"></div>
<svg class="a" style="left:258px;top:739px" width="22" height="19" viewBox="0 0 22 19">
 <path d="M0 1h8l2 2h12v16H0z" fill="#f5c242"/><path d="M0 3h22v2H0z" fill="#e9a93a"/><path d="M0 5h22v14H0z" fill="#fcd35a"/>
 <path d="M3 11h16v8h-5v-4H8v4H3z" fill="#2f86d6"/><path d="M9 15h4v2H9z" fill="#fcd35a"/>
</svg>
<!-- word -->
<svg class="a" style="left:306px;top:736px" width="23" height="23" viewBox="0 0 23 23">
 <path d="M10 3h13v17H10z" fill="#fff"/><path d="M14 6.5h7M14 8.5h7M14 10.5h7M14 12.5h7M14 14.5h7M14 16.5h7M14 18.5h7" stroke="#2b579a" stroke-width=".8"/>
 <path d="M0 2.5L13 0v23L0 20.5z" fill="#2b579a"/>
 <path d="M2 7l2 9 2.5-6 2.5 6 2-9" fill="none" stroke="#fff" stroke-width="1.7"/>
</svg>
<!-- notepad-like file -->
<svg class="a" style="left:359px;top:737px" width="16" height="21" viewBox="0 0 16 21"><path d="M0 0h11l5 5v16H0z" fill="#f4f4f4"/><path d="M11 0v5h5z" fill="#c8c8c8"/></svg>
<!-- utorrent -->
<svg class="a" style="left:403px;top:736px" width="25" height="24" viewBox="0 0 25 24">
 <circle cx="12.5" cy="12" r="12" fill="#6aa945"/><circle cx="12.5" cy="11" r="10" fill="#80bf55"/>
 <path d="M7 6v7a5 5 0 0 0 10 0V6M17 6v10M9 18l-2 5" fill="none" stroke="#fff" stroke-width="3"/>
</svg>
<div class="a" style="left:396px;top:766px;width:40px;height:2px;background:#76b9ed"></div>
<!-- chrome -->
<svg class="a" style="left:452px;top:736px" width="25" height="25" viewBox="0 0 24 24">
 <path d="M12 12L1.61 6A12 12 0 0 1 22.39 6z" fill="#db4437"/>
 <path d="M12 12L12 24A12 12 0 0 1 1.61 6z" fill="#0f9d58"/>
 <path d="M12 12L22.39 6A12 12 0 0 1 12 24z" fill="#f4c20d"/>
 <circle cx="12" cy="12" r="5.6" fill="#fff"/><circle cx="12" cy="12" r="4.4" fill="#4285f4"/>
</svg>
<!-- store -->
<svg class="a" style="left:502px;top:736px" width="23" height="24" viewBox="0 0 23 24">
 <path d="M6 5V2.5a2 2 0 0 1 2-2h7a2 2 0 0 1 2 2V5" fill="none" stroke="#1aa0e8" stroke-width="1.8"/>
 <path d="M0 4h23v18a2 2 0 0 1-2 2H2a2 2 0 0 1-2-2z" fill="#f2f2f2"/>
 <path d="M7 10h4v4H7z" fill="#f25022"/><path d="M12 10h4v4h-4z" fill="#7fba00"/><path d="M7 15h4v4H7z" fill="#00a4ef"/><path d="M12 15h4v4h-4z" fill="#ffb900"/>
</svg>
<!-- person app -->
<svg class="a" style="left:551px;top:736px" width="23" height="24" viewBox="0 0 23 24">
 <path d="M9 1h13v13H9z" fill="#6bb6e6"/><path d="M10 2h11v10H10z" fill="#2a8ad0"/><path d="M10 16h13v6H10z" fill="#3a6a9a"/><path d="M11 18h1M13 18h1M15 18h1M17 18h1M19 18h1M11 20h10" stroke="#fff"/>
 <circle cx="6" cy="8" r="4.5" fill="#f4a460"/><path d="M1.5 7a4.5 4.5 0 0 1 9 0c-2-1-6-1-9 0z" fill="#e0672a"/>
 <path d="M0 23c0-6 3-9 6-9s6 3 6 9z" fill="#e8581c"/>
</svg>
<!-- last app -->
<svg class="a" style="left:600px;top:736px" width="24" height="24" viewBox="0 0 24 24">
 <rect x="0" y="0" width="24" height="24" rx="2.5" fill="#f3f8fb"/>
 <path d="M4 6l6 3 9-5-4 6 3 2-5 1-2 5-2-6z" fill="#2a8cc8"/><path d="M14 14h5v5h-5z" fill="#1e4a7a"/>
</svg>
<!-- tray -->
<svg class="a" style="left:994px;top:735px" width="26" height="26" viewBox="0 0 26 26">
 <defs><linearGradient id="mg" x1="1" y1="0" x2="0" y2="1"><stop offset="0" stop-color="#f9d23c"/><stop offset=".5" stop-color="#fbb02e"/><stop offset="1" stop-color="#f0781a"/></linearGradient></defs>
 <path d="M17.25 2A12 12 0 1 1 1.4 17.4A13.4 13.4 0 0 0 17.25 2z" fill="url(#mg)"/>
</svg>
<div class="a" style="left:1027px;top:742px;font-size:14px;line-height:16px;color:#fff;letter-spacing:-.2px">16°C</div>
<div class="a" style="left:1065px;top:742px;font-size:14px;line-height:16px;color:#fff;letter-spacing:-.25px">Despejado</div>
<svg class="a" style="left:1147px;top:744px" width="13" height="8" viewBox="0 0 13 8"><path d="M1 7l5.5-5.5L12 7" fill="none" stroke="#fff" stroke-width="1.3"/></svg>
<svg class="a" style="left:1171px;top:744px" width="14" height="14" viewBox="0 0 14 14">
 <path d="M1 13A12 12 0 0 1 13 1M4 13a9 9 0 0 1 9-9M7 13a6 6 0 0 1 6-6" fill="none" stroke="#9a9a9a" stroke-width="1.1"/><circle cx="12" cy="12" r="1.6" fill="#fff"/>
</svg>
<svg class="a" style="left:1192px;top:744px" width="18" height="13" viewBox="0 0 18 13">
 <path d="M.5 4.5h3l4-4v12l-4-4h-3z" fill="none" stroke="#fff"/><path d="M10 4a3 3 0 0 1 0 5M12.5 2a6 6 0 0 1 0 9M15 .5a8.5 8.5 0 0 1 0 12" fill="none" stroke="#fff"/>
</svg>
<div class="a t" style="left:1221px;top:741px;color:#fff;transform:scaleX(.78);transform-origin:0 0">ESP</div>
<div class="a t" style="left:1267px;top:732px;color:#fff;letter-spacing:-.4px">19:09</div>
<div class="a t" style="left:1252px;top:750px;color:#fff;letter-spacing:-.1px">15/11/2022</div>
<svg class="a" style="left:1325px;top:740px" width="24" height="24" viewBox="0 0 24 24">
 <path d="M1 1h16v11h-6l-4 4v-4H1z" fill="#fff"/><path d="M4 4h10M4 6.5h10M4 9h10" stroke="#2c3032" stroke-width="1"/>
 <circle cx="16" cy="16" r="7" fill="#2c3032" stroke="#fff" stroke-width="1.2"/>
 <text x="16" y="20" font-family="Liberation Sans" font-weight="bold" font-size="10" fill="#fff" text-anchor="middle">1</text>
</svg>
<div class="a" style="left:1361px;top:728px;width:1px;height:40px;background:#5a5e60"></div>

</body></html>
